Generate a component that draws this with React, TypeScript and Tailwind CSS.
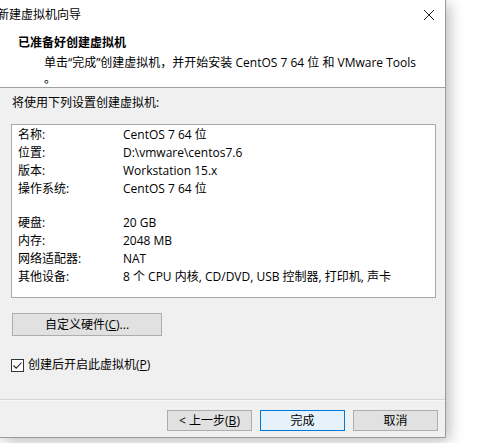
import React from "react";

const font = "font-['Segoe_UI','Open_Sans','Noto_Sans_CJK_SC',sans-serif]";

function Row({ label, value }: { label: string; value: string }) {
  return (
    <div className="flex h-[18px] items-center leading-[18px]">
      <div className="w-[105px] shrink-0">{label}</div>
      <div>{value}</div>
    </div>
  );
}

function Btn({ children, primary }: { children: React.ReactNode; primary?: boolean }) {
  return (
    <div
      className={
        "flex h-[21px] w-[85px] items-center justify-center border text-[12px] " +
        (primary ? "border-[#0078d7] bg-[#e5f1fb]" : "border-[#adadad] bg-[#e1e1e1]")
      }
    >
      {children}
    </div>
  );
}

export default function App() {
  return (
    <div className={`relative h-[443px] w-[488px] overflow-hidden bg-white text-[12px] text-black ${font}`}>
      <div className="flex h-[438px] w-[446px] flex-col border-b border-r border-[#9a9a9a] bg-[#f0f0f0] shadow-[3px_3px_14px_rgba(0,0,0,0.28)]">
        {/* title bar */}
        <div className="flex h-[30px] shrink-0 items-center justify-between bg-white">
          <span className="ml-[-3px] text-[12px]">新建虚拟机向导</span>
          <svg width="12" height="12" viewBox="0 0 12 12" className="mr-[10px]">
            <path d="M1 1 L11 11 M11 1 L1 11" stroke="#222" strokeWidth="1" fill="none" />
          </svg>
        </div>
        {/* header */}
        <div className="h-[58px] shrink-0 border-b border-[#a0a0a0] bg-white pt-[4px]">
          <div className="pl-[18px] font-bold leading-[18px]">已准备好创建虚拟机</div>
          <div className="mt-[3px] pl-[44px] leading-[16px]">
            单击“完成”创建虚拟机，并开始安装 CentOS 7 64 位 和 VMware Tools
            <br />。
          </div>
        </div>
        {/* body */}
        <div className="flex flex-1 flex-col">
          <div className="mt-[6px] pl-[12px] leading-[18px]">将使用下列设置创建虚拟机:</div>
          <div className="ml-[11px] mt-[12px] h-[174px] w-[425px] border border-[#a9a9a9] bg-white pl-[6px] pt-[1px]">
            <Row label="名称:" value="CentOS 7 64 位" />
            <Row label="位置:" value="D:\vmware\centos7.6" />
            <Row label="版本:" value="Workstation 15.x" />
            <Row label="操作系统:" value="CentOS 7 64 位" />
            <div className="h-[16px]" />
            <Row label="硬盘:" value="20 GB" />
            <Row label="内存:" value="2048 MB" />
            <Row label="网络适配器:" value="NAT" />
            <Row label="其他设备:" value="8 个 CPU 内核, CD/DVD, USB 控制器, 打印机, 声卡" />
          </div>
          <div className="ml-[12px] mt-[15px] flex h-[23px] w-[150px] items-center justify-center border border-[#adadad] bg-[#e1e1e1]">
            自定义硬件(<span className="underline">C</span>)...
          </div>
          <div className="ml-[11px] mt-[20px] flex items-center">
            <div className="flex h-[13px] w-[13px] items-center justify-center border border-[#333] bg-white">
              <svg width="11" height="11" viewBox="0 0 11 11">
                <path d="M1.5 5.5 L4.2 8.2 L9.5 2.5" stroke="#222" strokeWidth="1.1" fill="none" />
              </svg>
            </div>
            <span className="ml-[4px]">
              创建后开启此虚拟机(<span className="underline">P</span>)
            </span>
          </div>
          <div className="flex-1" />
          <div className="h-[2px] border-t border-[#d5d5d5] bg-[#f7f7f7]" />
          <div className="flex h-[36px] items-start gap-[8px] pl-[167px] pt-[9px]">
            <Btn>
              &lt; 上一步(<span className="underline">B</span>)
            </Btn>
            <Btn primary>完成</Btn>
            <Btn>取消</Btn>
          </div>
        </div>
      </div>
    </div>
  );
}
